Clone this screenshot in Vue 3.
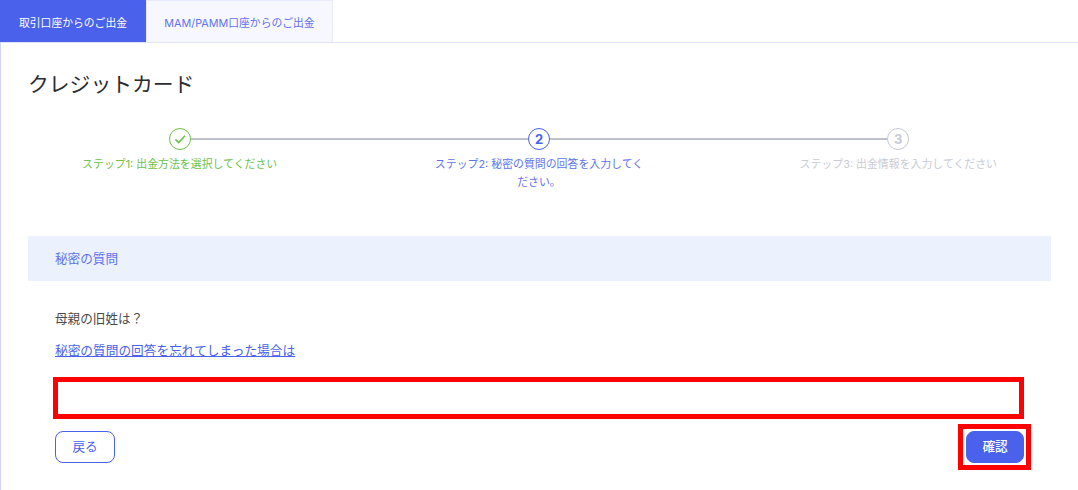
<template>
  <div class="page">
    <div class="tabs">
      <div class="tab active">取引口座からのご出金</div>
      <div class="tab">MAM/PAMM口座からのご出金</div>
    </div>

    <div class="card">
      <h1 class="title">クレジットカード</h1>

      <div class="steps">
        <div v-for="step in steps" :key="step.id" class="step" :class="step.state">
          <div class="circle">
            <svg v-if="step.state === 'done'" width="14" height="14" viewBox="0 0 14 14" fill="none">
              <path d="M2.4 7.4 L5.7 10.6 L12 3.8" stroke="#6cc24a" stroke-width="1.6" />
            </svg>
            <span v-else>{{ step.id }}</span>
          </div>
          <div class="label">{{ step.label }}</div>
        </div>
      </div>

      <div class="section-head">秘密の質問</div>

      <div class="section-body">
        <p class="question">母親の旧姓は？</p>
        <a class="forgot" href="#">秘密の質問の回答を忘れてしまった場合は</a>
        <div class="answer-box"></div>
        <div class="actions">
          <button class="btn back">戻る</button>
          <button class="btn confirm">確認</button>
        </div>
      </div>
    </div>
  </div>
</template>

<script setup>
const steps = [
  { id: 1, state: 'done', label: 'ステップ1: 出金方法を選択してください' },
  { id: 2, state: 'current', label: 'ステップ2: 秘密の質問の回答を入力してください。' },
  { id: 3, state: 'todo', label: 'ステップ3: 出金情報を入力してください' }
]
</script>

<style>
html, body {
  margin: 0;
  padding: 0;
  background: #fff;
  overflow: hidden;
}
</style>

<style scoped>
.page {
  width: 1078px;
  height: 490px;
  font-family: Inter, "Noto Sans CJK JP", sans-serif;
  color: #333;
  overflow: hidden;
}

.tabs {
  display: flex;
  height: 42px;
}

.tab {
  display: flex;
  align-items: center;
  justify-content: center;
  width: 187px;
  box-sizing: border-box;
  background: #f7f8ff;
  border: 1px solid #e8ebff;
  border-bottom: 0;
  color: #5f73ee;
  font-size: 10.8px;
}

.tab.active {
  width: 146px;
  background: #4a61ec;
  border-color: #4a61ec;
  color: #fff;
}

.card {
  height: 448px;
  box-sizing: border-box;
  border-top: 1px solid #dfe2fb;
  border-left: 1px solid #d0d6ff;
}

.title {
  margin: 0;
  padding: 28px 0 0 27px;
  font-size: 20.8px;
  line-height: 28px;
  font-weight: 400;
  color: #2b2b33;
}

.steps {
  display: grid;
  grid-template-columns: repeat(3, 359.33px);
  margin: 29px 0 0 -1px;
  height: 108px;
}

.step {
  position: relative;
  display: flex;
  flex-direction: column;
  align-items: center;
}

/* connector to the next step, runs behind the circles */
.step:not(:last-child)::after {
  content: "";
  position: absolute;
  top: 10px;
  left: 50%;
  width: 100%;
  height: 2px;
  background: #bfc2cb;
}

.circle {
  position: relative;
  z-index: 1;
  width: 22px;
  height: 22px;
  box-sizing: border-box;
  display: flex;
  align-items: center;
  justify-content: center;
  border: 1px solid #6cc24a;
  border-radius: 50%;
  background: #fff;
  font-size: 13px;
  font-weight: 700;
}

.label {
  width: 210px;
  margin-top: 5px;
  font-size: 10.9px;
  line-height: 18px;
  text-align: center;
}

.done .label {
  color: #6cc24a;
}

.current .circle {
  border-color: #4a61ec;
  color: #4a61ec;
}

.current .label {
  color: #5f73ee;
}

.todo .circle {
  border-color: #c5c9d3;
  color: #c5c9d3;
}

.todo .label {
  color: #c9ccd4;
}

.section-head {
  display: flex;
  align-items: center;
  margin-left: 27px;
  width: 1023px;
  height: 45px;
  padding: 0 0 2px 27px;
  box-sizing: border-box;
  background: #ebf1fd;
  color: #5f73ee;
  font-size: 12.6px;
}

.section-body {
  padding: 0 0 0 54px;
  width: 969px;
}

.question {
  margin: 29px 0 0;
  font-size: 12.6px;
  line-height: 18px;
  color: #4a4a4a;
}

.forgot {
  display: block;
  margin-top: 14px;
  font-size: 12.7px;
  line-height: 18px;
  color: #4a61ec;
  text-decoration: underline;
}

.answer-box {
  margin: 17px 0 0 -2px;
  width: 971px;
  height: 42px;
  box-sizing: border-box;
  border: 5px solid #ff0000;
}

.actions {
  display: flex;
  justify-content: space-between;
  margin-top: 12px;
}

.btn {
  position: relative;
  width: 60px;
  height: 32px;
  padding: 0 0 3px;
  border: 1px solid #4a61ec;
  border-radius: 8px;
  background: #fff;
  color: #4a61ec;
  font-family: inherit;
  font-size: 12.6px;
}

.confirm {
  width: 58px;
  background: #4a61ec;
  color: #fff;
  font-weight: 500;
}

/* red annotation drawn round the button */
.confirm::after {
  content: "";
  position: absolute;
  inset: -8px -8px -8px -9px;
  border: 5px solid #ff0000;
}
</style>
